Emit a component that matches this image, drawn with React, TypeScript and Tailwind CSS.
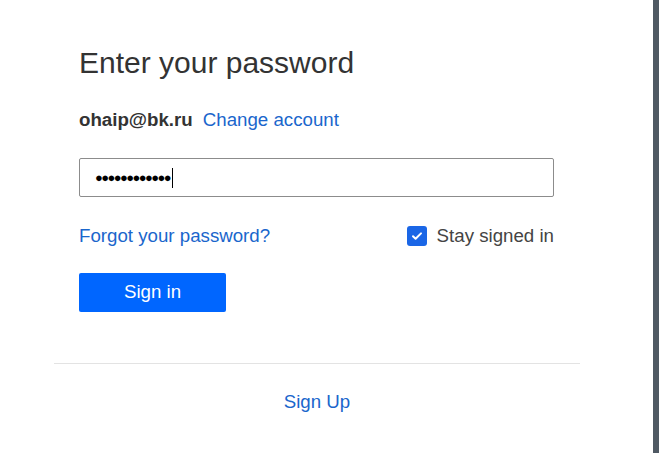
import React from "react";

export default function App() {
  return (
    <div
      className="flex h-[453px] w-[659px] overflow-hidden bg-white"
      style={{ fontFamily: '"Liberation Sans", Arial, sans-serif' }}
    >
      <div className="flex-1 pl-[54px]">
        <div className="w-[526px]">
          <div className="pl-[25px] pr-[26px] pt-[45px]">
            <h1 className="text-[30px] leading-[36px] text-[#333333]">Enter your password</h1>

            <div className="mt-[27px] flex items-center gap-[10px] text-[18.7px] leading-[24px]">
              <span className="font-bold text-[#333333]">ohaip@bk.ru</span>
              <a className="text-[#1a66cc]">Change account</a>
            </div>

            <div className="mt-[26px] flex h-[39px] items-center rounded-[2px] border border-[#8c8c8c] pl-[15px]">
              <span className="text-[13px] tracking-[-1.6px] text-black">●●●●●●●●●●●●</span>
              <span className="ml-[2px] h-[20px] w-px bg-black" />
            </div>

            <div className="mt-[27px] flex items-center justify-between text-[18.7px] leading-[24px]">
              <a className="text-[#1a66cc]">Forgot your password?</a>
              <div className="flex items-center gap-[10px]">
                <span className="flex h-[20px] w-[20px] items-center justify-center rounded-[3px] bg-[#1a66e6]">
                  <svg width="12" height="12" viewBox="0 0 12 12" fill="none">
                    <path d="M2 6.2l2.6 2.6L10 3.4" stroke="white" strokeWidth="2" strokeLinecap="round" strokeLinejoin="round" />
                  </svg>
                </span>
                <span className="text-[#444444]">Stay signed in</span>
              </div>
            </div>

            <button className="mt-[25px] flex h-[39px] w-[147px] items-center justify-center rounded-[2px] bg-[#0066ff] text-[18.7px] text-white">
              Sign in
            </button>
          </div>

          <div className="mt-[51px] h-px bg-[#e3e3e3]" />

          <div className="mt-[26px] text-center text-[18.7px] leading-[24px]">
            <a className="text-[#1a66cc]">Sign Up</a>
          </div>
        </div>
      </div>
      <div className="w-[6px] bg-[#4f5963]" />
    </div>
  );
}
